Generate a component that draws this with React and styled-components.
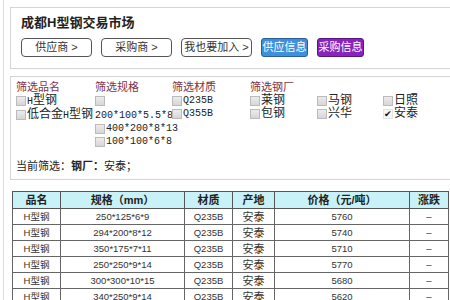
import React from "react";
import styled, { createGlobalStyle } from "styled-components";

const GlobalStyle = createGlobalStyle`
  html, body {
    margin: 0;
    padding: 0;
    background: #fff;
    overflow: hidden;
  }
  body {
    font-family: "Liberation Sans", "Noto Sans CJK SC", sans-serif;
    color: #222;
  }
`;

const filters = {
  names: [
    ["", "型钢"],
    ["低合金", "型钢"],
  ],
  specs: ["400*200*8*13", "100*100*6*8"],
  materials: ["Q235B", "Q355B"],
  mills: [
    { name: "莱钢" },
    { name: "马钢" },
    { name: "日照" },
    { name: "包钢" },
    { name: "兴华" },
    { name: "安泰", checked: true },
  ],
};

const rows = [
  ["250*125*6*9", "5760"],
  ["294*200*8*12", "5740"],
  ["350*175*7*11", "5710"],
  ["250*250*9*14", "5770"],
  ["300*300*10*15", "5680"],
  ["340*250*9*14", "5620"],
];

export default function App() {
  return (
    <>
      <GlobalStyle />
      <Page>
        <HeadCard>
          <Title>成都H型钢交易市场</Title>
          <ButtonRow>
            <NavButton>供应商 &gt;</NavButton>
            <NavButton>采购商 &gt;</NavButton>
            <NavButton>我也要加入 &gt;</NavButton>
            <InfoButton $bg="#3f8fdc" $edge="#2a5f96">供应信息</InfoButton>
            <InfoButton $bg="#8a22bd" $edge="#5a1680">采购信息</InfoButton>
          </ButtonRow>
        </HeadCard>

        <FilterCard>
          <FilterGrid>
            <FilterCol>
              <FilterTitle>筛选品名</FilterTitle>
              {filters.names.map(([pre, post]) => (
                <Option key={pre + post}>
                  <Box />
                  <BigLabel>
                    {pre}
                    <Mono>H</Mono>
                    {post}
                  </BigLabel>
                </Option>
              ))}
            </FilterCol>
            <FilterCol>
              <FilterTitle>筛选规格</FilterTitle>
              <Option $wrap>
                <Box />
                <WrappedText>200*100*5.5*8</WrappedText>
              </Option>
              {filters.specs.map((s) => (
                <Option key={s}>
                  <Box />
                  <Mono>{s}</Mono>
                </Option>
              ))}
            </FilterCol>
            <FilterCol>
              <FilterTitle>筛选材质</FilterTitle>
              {filters.materials.map((m) => (
                <Option key={m}>
                  <Box />
                  <Mono>{m}</Mono>
                </Option>
              ))}
            </FilterCol>
            <FilterCol>
              <FilterTitle>筛选钢厂</FilterTitle>
              <MillGrid>
                {filters.mills.map((m) => (
                  <Option key={m.name}>
                    <Box $checked={m.checked}>{m.checked ? "✔" : null}</Box>
                    <BigLabel>{m.name}</BigLabel>
                  </Option>
                ))}
              </MillGrid>
            </FilterCol>
          </FilterGrid>
          <Current>
            当前筛选：<b>钢厂：</b>安泰；
          </Current>
        </FilterCard>

        <PriceTable>
          <colgroup>
            <col style={{ width: 48 }} />
            <col style={{ width: 124 }} />
            <col style={{ width: 48 }} />
            <col style={{ width: 42 }} />
            <col style={{ width: 135 }} />
            <col style={{ width: 39 }} />
          </colgroup>
          <thead>
            <tr>
              <Th>品名</Th>
              <Th>规格（mm）</Th>
              <Th>材质</Th>
              <Th>产地</Th>
              <Th>价格（元/吨）</Th>
              <Th>涨跌</Th>
            </tr>
          </thead>
          <tbody>
            {rows.map(([spec, price]) => (
              <tr key={spec}>
                <Td>H型钢</Td>
                <Td>{spec}</Td>
                <Td>Q235B</Td>
                <Td $big>安泰</Td>
                <Td>{price}</Td>
                <Td>–</Td>
              </tr>
            ))}
          </tbody>
        </PriceTable>
      </Page>
    </>
  );
}

const Page = styled.div`
  width: 470px;
  height: 300px;
  overflow: hidden;
  margin-left: 3px;
  border-left: 1px solid #dcdcdc;
  padding: 7px 0 0 6px;
  box-sizing: border-box;
`;

const HeadCard = styled.div`
  border-top: 1px solid #d4d4d4;
  border-bottom: 1px solid #d4d4d4;
  border-left: 1px solid #d4d4d4;
  padding: 6px 0 11px 10px;
`;

const Title = styled.div`
  font-weight: bold;
  font-size: 13px;
  line-height: 18px;
  color: #222;
  margin-bottom: 6px;
`;

const ButtonRow = styled.div`
  display: flex;
  gap: 9px;
`;

const NavButton = styled.div`
  width: 69px;
  height: 17px;
  border: 1px solid #555;
  border-radius: 4px;
  background: #fff;
  font-size: 11px;
  line-height: 17px;
  text-align: center;
  color: #333;
`;

const InfoButton = styled.div`
  width: 45px;
  height: 17px;
  border: 1px solid ${(p) => p.$edge};
  border-radius: 3px;
  background: ${(p) => p.$bg};
  color: #fff;
  font-size: 11px;
  line-height: 17px;
  text-align: center;
`;

const FilterCard = styled.div`
  margin-top: 7px;
  border-top: 1px solid #d4d4d4;
  border-bottom: 1px solid #d4d4d4;
  border-left: 1px solid #d4d4d4;
  padding: 4px 0 6px 5px;
`;

const FilterGrid = styled.div`
  display: grid;
  grid-template-columns: 79px 77px 78px 1fr;
  align-items: start;
`;

const FilterCol = styled.div`
  display: flex;
  flex-direction: column;
  min-width: 0;
`;

const FilterTitle = styled.div`
  font-size: 11px;
  line-height: 13px;
  color: #7d3347;
`;

const MillGrid = styled.div`
  display: grid;
  grid-template-columns: 67px 66px 66px;
`;

const Option = styled.div`
  display: flex;
  flex-wrap: ${(p) => (p.$wrap ? "wrap" : "nowrap")};
  align-items: center;
  min-height: 13px;
  white-space: nowrap;
  color: #222;
`;

const Box = styled.span`
  display: block;
  box-sizing: border-box;
  width: 10px;
  height: 10px;
  margin: 1.5px 1px 1.5px 0;
  flex: none;
  border: 1px solid ${(p) => (p.$checked ? "#e4e4e4" : "#bbbbbb")};
  background: ${(p) => (p.$checked ? "#f6f6f6" : "linear-gradient(#ececec, #d6d6d6)")};
  font-size: 9px;
  line-height: 8px;
  text-align: center;
  color: #111;
`;

const Mono = styled.span`
  font-family: "Liberation Mono", "Noto Sans CJK SC", monospace;
  font-size: 10px;
  line-height: 13px;
`;

const WrappedText = styled(Mono)`
  flex: 0 0 100%;
  margin-top: 2px;
`;

const BigLabel = styled.span`
  font-size: 12px;
  line-height: 13px;
`;

const Current = styled.div`
  margin-top: 12px;
  font-size: 11px;
  line-height: 13px;
  color: #222;
`;

const PriceTable = styled.table`
  margin: 11px 0 0 2px;
  width: 436px;
  border-collapse: collapse;
  table-layout: fixed;
  border: 1px solid #444;
`;

const Th = styled.th`
  height: 16px;
  padding: 0;
  border: 1px solid #555;
  background: #c8f2f8;
  font-size: 11px;
  font-weight: bold;
  line-height: 15px;
  color: #222;
  text-align: center;
`;

const Td = styled.td`
  height: 15px;
  padding: 0;
  border: 1px solid #666;
  font-size: ${(p) => (p.$big ? "11px" : "9.5px")};
  line-height: 14px;
  color: #333;
  text-align: center;
  white-space: nowrap;
`;
